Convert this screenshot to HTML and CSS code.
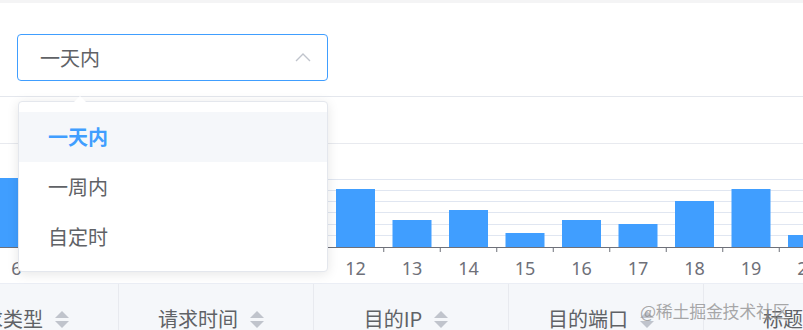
FILE: index.html
```html
<!DOCTYPE html>
<html lang="zh">
<head>
<meta charset="utf-8">
<link rel="stylesheet" href="styles.css">
</head>
<body>
<div class="page">
  <div class="topbar"></div>
  <div class="filter">
    <div class="select">
      <span class="select-text">一天内</span>
      <svg class="chevron" width="16" height="10" viewBox="0 0 16 10"><path d="M1 9 L8 2 L15 9" fill="none" stroke="#c0c4cc" stroke-width="1.4"/></svg>
    </div>
  </div>
  <div class="tabs"></div>
  <div class="chart">
    <svg width="803" height="139" viewBox="0 0 803 139">
      <g stroke="#e0e6f1" stroke-width="1">
        <line x1="0" y1="35.5" x2="803" y2="35.5"/>
        <line x1="0" y1="46.5" x2="803" y2="46.5"/>
        <line x1="0" y1="57.5" x2="803" y2="57.5"/>
        <line x1="0" y1="68.5" x2="803" y2="68.5"/>
        <line x1="0" y1="80.5" x2="803" y2="80.5"/>
        <line x1="0" y1="91.5" x2="803" y2="91.5"/>
      </g>
      <g fill="#409eff">
        <rect x="-3" y="34" width="39" height="69"/>
        <rect x="53.5" y="50" width="39" height="53"/>
        <rect x="110" y="70" width="39" height="33"/>
        <rect x="166.5" y="60" width="39" height="43"/>
        <rect x="223" y="80" width="39" height="23"/>
        <rect x="279.5" y="40" width="39" height="63"/>
        <rect x="336" y="45" width="39" height="58"/>
        <rect x="392.5" y="76" width="39" height="27"/>
        <rect x="449" y="66" width="39" height="37"/>
        <rect x="505.5" y="89" width="39" height="14"/>
        <rect x="562" y="76" width="39" height="27"/>
        <rect x="618.5" y="80" width="39" height="23"/>
        <rect x="675" y="57" width="39" height="46"/>
        <rect x="731.5" y="45" width="39" height="58"/>
        <rect x="788" y="91" width="39" height="12"/>
      </g>
      <line x1="0" y1="103.5" x2="803" y2="103.5" stroke="#6e7079" stroke-width="1"/>
      <g stroke="#6e7079" stroke-width="1">
        <line x1="44.75" y1="103" x2="44.75" y2="108"/>
        <line x1="101.25" y1="103" x2="101.25" y2="108"/>
        <line x1="157.75" y1="103" x2="157.75" y2="108"/>
        <line x1="214.25" y1="103" x2="214.25" y2="108"/>
        <line x1="270.75" y1="103" x2="270.75" y2="108"/>
        <line x1="327.25" y1="103" x2="327.25" y2="108"/>
        <line x1="383.75" y1="103" x2="383.75" y2="108"/>
        <line x1="440.25" y1="103" x2="440.25" y2="108"/>
        <line x1="496.75" y1="103" x2="496.75" y2="108"/>
        <line x1="553.25" y1="103" x2="553.25" y2="108"/>
        <line x1="609.75" y1="103" x2="609.75" y2="108"/>
        <line x1="666.25" y1="103" x2="666.25" y2="108"/>
        <line x1="722.75" y1="103" x2="722.75" y2="108"/>
        <line x1="779.25" y1="103" x2="779.25" y2="108"/>
      </g>
      <g class="axis-label" text-anchor="middle">
        <text x="16.5" y="131">6</text>
        <text x="355.5" y="131">12</text>
        <text x="412" y="131">13</text>
        <text x="468.5" y="131">14</text>
        <text x="525" y="131">15</text>
        <text x="581.5" y="131">16</text>
        <text x="638" y="131">17</text>
        <text x="694.5" y="131">18</text>
        <text x="751" y="131">19</text>
        <text x="807.5" y="131">20</text>
      </g>
    </svg>
  </div>
  <div class="thead">
    <div class="th"><span>请求类型</span><i class="caret"></i></div>
    <div class="th"><span>请求时间</span><i class="caret"></i></div>
    <div class="th"><span>目的IP</span><i class="caret"></i></div>
    <div class="th"><span>目的端口</span><i class="caret"></i></div>
    <div class="th"><span>标题</span><i class="caret"></i></div>
  </div>

  <div class="dropdown">
    <div class="notch"></div>
    <ul class="options">
      <li class="option selected">一天内</li>
      <li class="option">一周内</li>
      <li class="option">自定时</li>
    </ul>
  </div>
  <div class="watermark">@稀土掘金技术社区</div>
</div>
</body>
</html>
```

FILE: styles.css
```css
html, body {
  margin: 0;
  padding: 0;
  background: #ffffff;
}
body {
  font-family: "Noto Sans CJK SC", "Noto Sans", sans-serif;
  color: #606266;
  overflow: hidden;
}
.page {
  position: relative;
  width: 803px;
  height: 330px;
  overflow: hidden;
}
.topbar {
  height: 3px;
  background: #f4f4f5;
}
.filter {
  height: 94px;
  box-sizing: border-box;
  padding: 31px 0 0 17px;
  border-bottom: 1px solid #e4e7ed;
}
.select {
  width: 311px;
  height: 47px;
  box-sizing: border-box;
  border: 1px solid #409eff;
  border-radius: 4px;
  display: flex;
  align-items: center;
  justify-content: space-between;
  padding: 0 16px 0 22px;
}
.select-text {
  font-size: 20px;
  line-height: 1;
  color: #606266;
}
.chevron {
  display: block;
  margin-top: -1px;
}
.tabs {
  height: 46px;
  border-bottom: 1px solid #e8eaef;
}
.chart {
  height: 139px;
}
.chart svg {
  display: block;
}
.axis-label {
  font-family: "Noto Sans", "DejaVu Sans", sans-serif;
  font-size: 18px;
  fill: #6e7079;
}
.thead {
  display: flex;
  border-top: 1px solid #ebeef5;
  background: #f5f7fa;
  height: 46px;
  margin-left: -76px;
}
.th {
  flex: 0 0 195px;
  box-sizing: border-box;
  border-right: 1px solid #e8eaef;
  display: flex;
  justify-content: center;
  align-items: flex-start;
  padding: 22px 10px 0 0;
  font-size: 20px;
  line-height: 26px;
  color: #606266;
}
.th span {
  white-space: nowrap;
}
.caret {
  position: relative;
  display: inline-block;
  width: 14px;
  height: 26px;
  margin-left: 12px;
}
.caret::before,
.caret::after {
  content: "";
  position: absolute;
  left: 0;
  border-left: 7px solid transparent;
  border-right: 7px solid transparent;
}
.caret::before {
  top: 5px;
  border-bottom: 7px solid #c0c4cc;
}
.caret::after {
  top: 15px;
  border-top: 7px solid #c0c4cc;
}
.dropdown {
  position: absolute;
  left: 18px;
  top: 101px;
  width: 310px;
  box-sizing: border-box;
  background: #ffffff;
  border: 1px solid #e4e7ed;
  border-radius: 4px;
  box-shadow: 0 2px 12px rgba(0, 0, 0, 0.1);
}
.notch {
  position: absolute;
  left: 55px;
  top: -6px;
  width: 0;
  height: 0;
  border-left: 6px solid transparent;
  border-right: 6px solid transparent;
  border-bottom: 6px solid #ffffff;
}
.options {
  list-style: none;
  margin: 0;
  padding: 10px 0 9px;
}
.option {
  height: 50px;
  line-height: 50px;
  padding-left: 29px;
  font-size: 20px;
  color: #606266;
}
.option.selected {
  background: #f5f7fa;
  color: #409eff;
  font-weight: 700;
}
.watermark {
  position: absolute;
  left: 640px;
  top: 298px;
  font-size: 17px;
  color: rgba(140, 140, 140, 0.75);
  white-space: nowrap;
  letter-spacing: -0.3px;
}
```
